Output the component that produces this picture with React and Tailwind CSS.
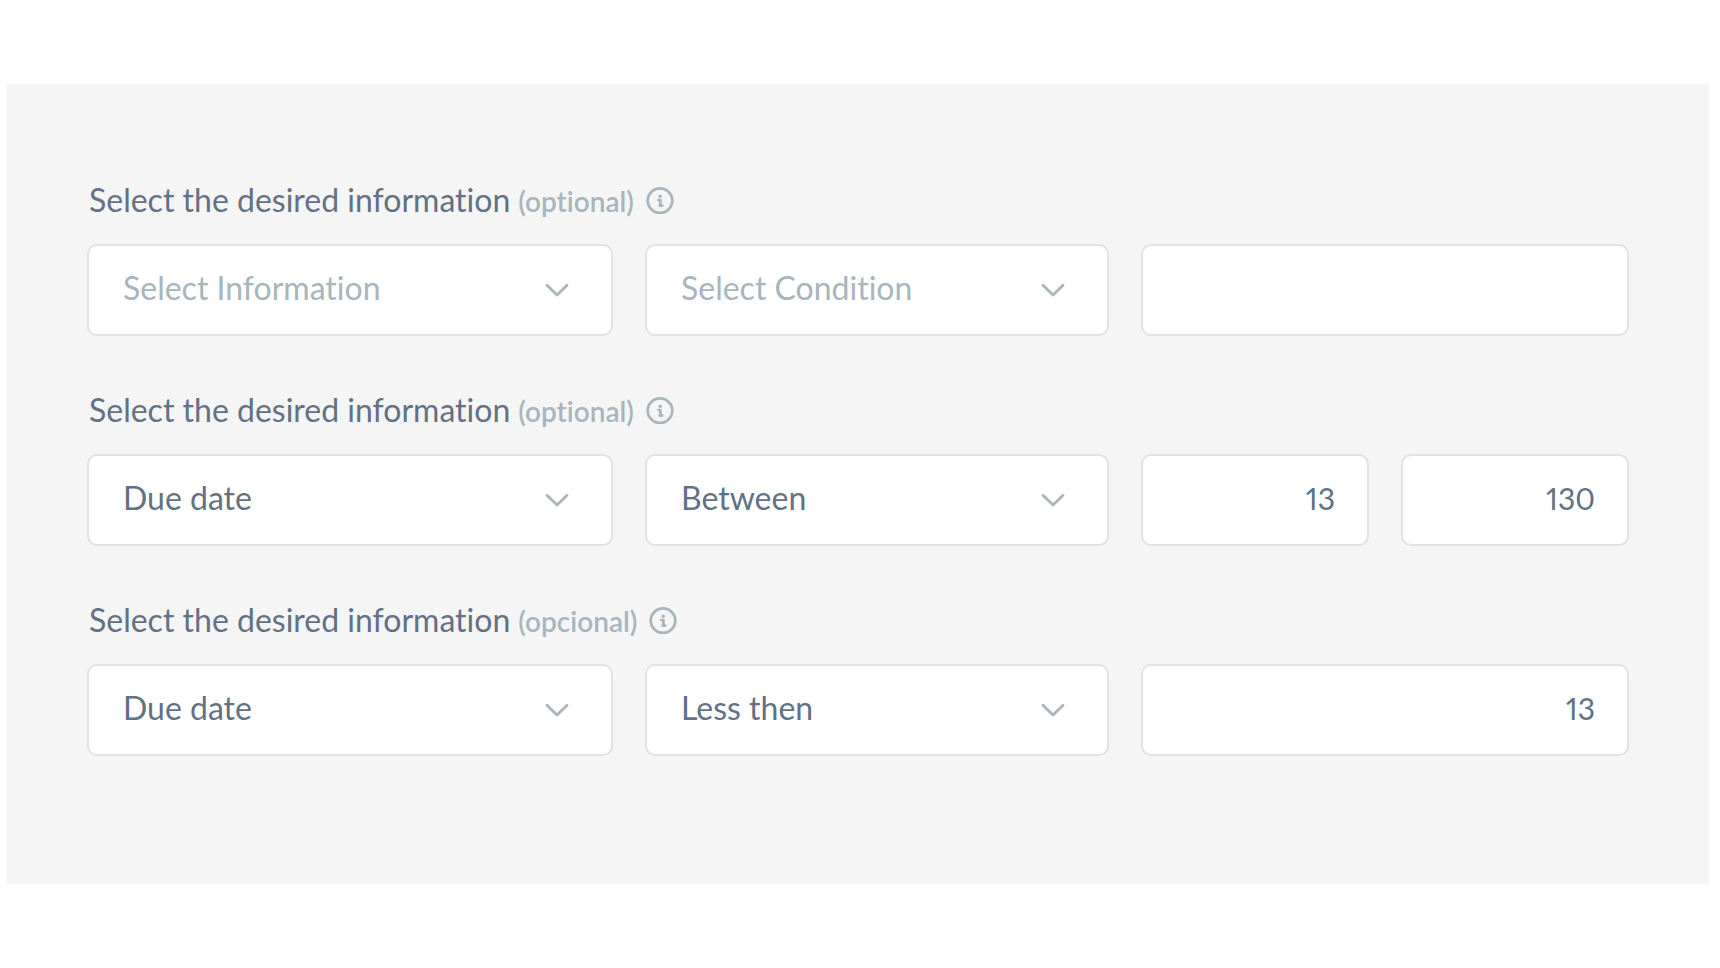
import { useId, useState } from "react";

const INFORMATION = ["Due date", "Issue date", "Amount"];
const CONDITIONS = ["Between", "Less then", "Greater then"];

const filters = [
  { hint: "optional", information: "", condition: "", values: [""] },
  { hint: "optional", information: "Due date", condition: "Between", values: ["13", "130"] },
  { hint: "opcional", information: "Due date", condition: "Less then", values: ["13"] },
];

function InfoIcon() {
  return (
    <svg className="h-7 w-7" viewBox="0 0 28 28" fill="none" aria-hidden="true">
      <circle cx="14" cy="14.6" r="12.3" stroke="currentColor" strokeWidth="2.8" />
      <circle cx="14.2" cy="10.2" r="1.7" fill="currentColor" />
      <path d="M12.4 14h2v5.6h1.8M14.4 19.6h-.8" stroke="currentColor" strokeWidth="2.7" strokeLinejoin="round" strokeLinecap="round" />
    </svg>
  );
}

function Chevron() {
  return (
    <svg
      className="pointer-events-none absolute top-1/2 right-11 h-6 w-6 -translate-y-1/2 text-[#a8b5bc]"
      viewBox="0 0 24 24"
      fill="none"
      aria-hidden="true"
    >
      <path d="M2 7.2l10 9.9 10-9.9" stroke="currentColor" strokeWidth="2.8" strokeLinecap="round" strokeLinejoin="round" />
    </svg>
  );
}

function Select({ id, label, placeholder, options, initial }) {
  const [value, setValue] = useState(initial);

  return (
    <div className="relative min-w-0">
      <select
        id={id}
        aria-label={label}
        value={value}
        onChange={(e) => setValue(e.target.value)}
        className={`h-[92px] w-full appearance-none rounded-[10px] border-2 border-[#e2e2e2] bg-white pr-20 pb-1 pl-[34px] focus:border-[#a8b5bc] focus:outline-none ${
          value ? "text-[#627183]" : "text-[#a8b5bc]"
        }`}
      >
        <option value="" disabled hidden>
          {placeholder}
        </option>
        {options.map((option) => (
          <option key={option}>{option}</option>
        ))}
      </select>
      <Chevron />
    </div>
  );
}

function ValueInput({ label, initial }) {
  const [value, setValue] = useState(initial);

  return (
    <input
      type="text"
      inputMode="numeric"
      aria-label={label}
      value={value}
      onChange={(e) => setValue(e.target.value)}
      className="h-[92px] w-full min-w-0 flex-1 rounded-[10px] border-2 border-[#e2e2e2] bg-white px-8 pb-1 text-right text-[30px] proportional-nums focus:border-[#a8b5bc] focus:outline-none"
    />
  );
}

function FilterRow({ filter }) {
  const id = useId();

  return (
    <div>
      {/* Label */}
      <div className="mb-7 flex h-8 items-center pl-0.5">
        <label htmlFor={id} className="flex items-baseline gap-2">
          Select the desired information
          <span className="text-[28px] font-semibold text-[#a8b5bc]">({filter.hint})</span>
        </label>
        <button type="button" aria-label="More info" className="ml-3 text-[#a8b5bc]">
          <InfoIcon />
        </button>
      </div>

      {/* Fields */}
      <div className="grid grid-cols-[526fr_464fr_488fr] gap-8">
        <Select id={id} placeholder="Select Information" options={INFORMATION} initial={filter.information} />
        <Select label="Condition" placeholder="Select Condition" options={CONDITIONS} initial={filter.condition} />
        <div className="flex min-w-0 gap-8">
          {filter.values.map((value, i) => (
            <ValueInput key={i} label={`Value ${i + 1}`} initial={value} />
          ))}
        </div>
      </div>
    </div>
  );
}

function App() {
  return (
    <div className="min-h-screen bg-white pt-[84px] pr-[11px] pb-[84px] pl-[7px]">
      <form className="flex flex-col gap-[58px] bg-[#f5f5f5] px-20 pt-[100px] pb-32 font-[Lato,sans-serif] text-[32px] leading-8 text-[#627183] [font-variant-ligatures:none]">
        {filters.map((filter, i) => (
          <FilterRow key={i} filter={filter} />
        ))}
      </form>
    </div>
  );
}

export default App;
